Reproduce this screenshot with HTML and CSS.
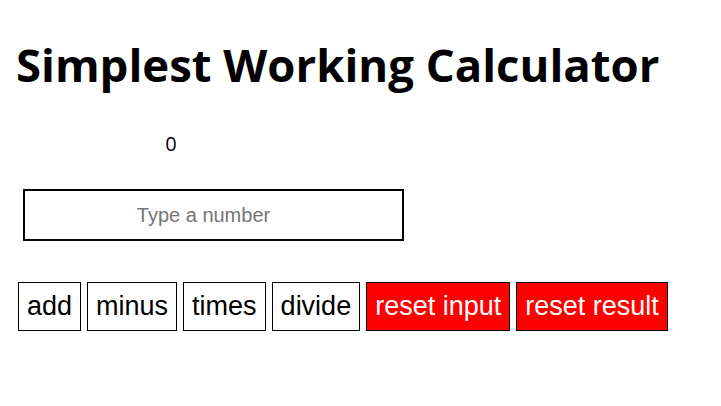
FILE: index.html
```html
<!DOCTYPE html>
<html>
<head>
<meta charset="utf-8">
<link rel="stylesheet" href="styles.css">
</head>
<body>
<h1 class="title">Simplest Working Calculator</h1>
<p class="result">0</p>
<div class="input-row">
  <input class="number-input" type="text" placeholder="Type a number">
</div>
<div class="buttons">
  <button class="btn">add</button>
  <button class="btn">minus</button>
  <button class="btn">times</button>
  <button class="btn">divide</button>
  <button class="btn btn-red">reset input</button>
  <button class="btn btn-red">reset result</button>
</div>
</body>
</html>
```
FILE: styles.css
```css
body {
  margin: 8px;
  font-family: "Open Sans", "Noto Sans", sans-serif;
  background: #fff;
}
.title {
  margin: 24px 0 0 8px;
  font-size: 45.5px;
  font-weight: 700;
  line-height: 64px;
  color: #000;
}
.result {
  margin: 34px 0 0 0;
  width: 326px;
  text-align: center;
  font-size: 20px;
  line-height: 28px;
}
.input-row {
  margin-top: 31px;
  padding-left: 15px;
}
.number-input {
  box-sizing: border-box;
  width: 381px;
  height: 52px;
  border: 2px solid #000;
  font-family: "Liberation Sans", Arial, sans-serif;
  font-size: 20px;
  text-align: center;
  padding: 0 20px 0 0;
  outline: none;
}
.number-input::placeholder {
  color: #757575;
}
.buttons {
  display: flex;
  gap: 6px;
  margin-top: 41px;
  padding-left: 10px;
}
.btn {
  box-sizing: border-box;
  height: 49px;
  padding: 0 8px;
  border: 1px solid #000;
  background: #fff;
  color: #000;
  font-family: "Liberation Sans", Arial, sans-serif;
  font-size: 27px;
  border-radius: 0;
}
.btn-red {
  background: #ff0000;
  color: #fff;
}
```
